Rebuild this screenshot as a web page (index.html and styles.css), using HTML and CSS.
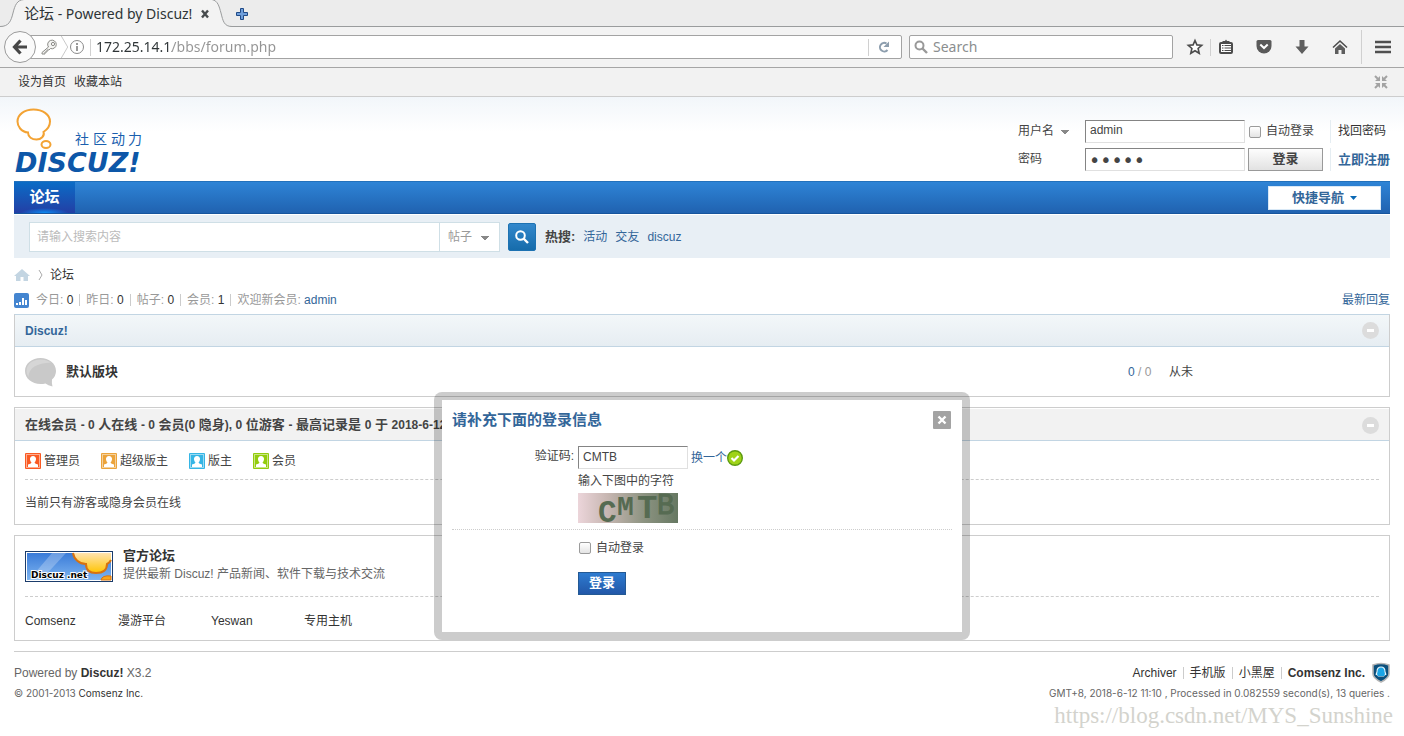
FILE: index.html
```html
<!DOCTYPE html>
<html lang="zh-CN">
<head>
<meta charset="utf-8">
<title>论坛 - Powered by Discuz!</title>
<link rel="stylesheet" href="styles.css">
</head>
<body>
<div class="browser">
  <div class="tabstrip">
    <svg class="tab-curve" width="24" height="27" viewBox="0 0 24 27"><path d="M0 26.500C9 26.500 11 21 13 13C15 5 17 0 24 0V27H0z" fill="#f3f3f3"/><path d="M0 26.500C9 26.500 11 21 13 13C15 5 17 0 24 -.5" fill="none" stroke="#9a9c9d"/></svg>
    <div class="tab">
      <span class="tab-title"><span class="tab-cjk">论坛</span> - Powered by Discuz!</span>
      <button class="icon-btn" aria-label="Close tab"><svg width="10" height="10" viewBox="0 0 10 10"><path d="M2 1.500L8 8.500M8 1.500L2 8.500" stroke="#474b4d" stroke-width="2.400"/></svg></button>
    </div>
    <svg class="tab-curve" width="20" height="27" viewBox="0 0 20 27"><path d="M0 0C6 1 7 6 9 13C11 21 12 26.500 20 26.500V27H0z" fill="#f3f3f3"/><path d="M0 -.5C6 1 7 6 9 13C11 21 12 26.500 20 26.500" fill="none" stroke="#9a9c9d"/></svg>
    <button class="icon-btn new-tab" aria-label="New tab"><svg width="12" height="12" viewBox="0 0 12 12"><path d="M4.500 .5h3v4h4v3h-4v4h-3v-4h-4v-3h4z" fill="#6f9fdc" stroke="#204a87"/></svg></button>
  </div>
  <div class="toolbar">
    <button class="back" aria-label="Back"><svg width="16" height="16" viewBox="0 0 16 16"><path d="M8.500 1.500L2.500 8l6 6.500M3 8h12" fill="none" stroke="#474747" stroke-width="3.200"/></svg></button>
    <div class="urlbar">
      <svg width="17" height="16" viewBox="0 0 17 16"><path d="M7.500 8L1 13.500V15h3v-2h2v-2h2l1.500-1.500A4.300 4.300 0 1 0 7.500 8z" fill="#f4f4f2" stroke="#8a8a86"/><circle cx="12" cy="5" r="1.600" fill="#fff" stroke="#8a8a86"/></svg>
      <svg class="chevron" width="9" height="24" viewBox="0 0 9 24"><path d="M1 0L8 12L1 24" fill="none" stroke="#c4c4c4"/></svg>
      <svg width="16" height="16" viewBox="0 0 16 16"><circle cx="8" cy="8" r="6.500" fill="none" stroke="#8b8b8b"/><path d="M8 7v5M8 4v2" stroke="#808080" stroke-width="1.600"/></svg>
      <span class="vline"></span>
      <input class="url" type="text" aria-label="Address" value="172.25.14.1/bbs/forum.php">
      <span class="vline"></span>
      <button class="icon-btn reload" aria-label="Reload"><svg width="12" height="12" viewBox="0 0 12 12"><path d="M9.500 9A4.300 4.300 0 1 1 8.500 2.500" fill="none" stroke="#8d9eae" stroke-width="2"/><path d="M11 .5V6H5.500z" fill="#8d9eae"/></svg></button>
    </div>
    <div class="searchbar">
      <svg width="14" height="14" viewBox="0 0 14 14"><circle cx="5.500" cy="5.500" r="4" fill="none" stroke="#999" stroke-width="2"/><path d="M8.500 8.500L13 13" stroke="#999" stroke-width="2.400"/></svg>
      <input type="text" aria-label="Search" placeholder="Search">
    </div>
    <div class="tools">
      <button class="icon-btn" aria-label="Bookmark"><svg width="16" height="16" viewBox="0 0 16 16"><path d="M8 1.500l1.900 4.400 4.800.4-3.600 3.200 1.100 4.800L8 11.800l-4.200 2.500 1.100-4.800L1.300 6.300l4.800-.4z" fill="#fff" stroke="#4c4c4c" stroke-width="1.600"/></svg></button>
      <span class="vline"></span>
      <button class="icon-btn" aria-label="Bookmarks menu"><svg width="16" height="16" viewBox="0 0 16 16"><rect x="2" y="4" width="12" height="10" rx="1" fill="#fff" stroke="#4c4c4c" stroke-width="2"/><path d="M4.500 4V2H7L8 .5 9 2h2.500v2z" fill="#4c4c4c"/><path d="M6.500 6.500H13M6.500 9H13M6.500 11.500H13M4 6.500h1.500M4 9h1.500M4 11.500h1.500" stroke="#4c4c4c"/></svg></button>
      <button class="icon-btn" aria-label="Pocket"><svg width="16" height="16" viewBox="0 0 16 16"><path d="M.5 2.500Q.5 1 2 1h12q1.500 0 1.500 1.500V7a7.500 7.500 0 0 1-15 0z" fill="#5a5a5a"/><path d="M4.300 5.500L8 9l3.700-3.500" fill="none" stroke="#fff" stroke-width="2"/></svg></button>
      <button class="icon-btn" aria-label="Downloads"><svg width="16" height="16" viewBox="0 0 16 16"><path d="M5.500 1h5v6.500h4L8 15 1.500 7.500h4z" fill="#5e5e5e"/></svg></button>
      <button class="icon-btn" aria-label="Home"><svg width="16" height="16" viewBox="0 0 16 16"><path d="M1 8.500L8 2l7 6.500" fill="none" stroke="#4c4c4c" stroke-width="1.600"/><path d="M3 9.500L8 5l5 4.500V15H9.500v-4h-3v4H3z" fill="#5e5e5e"/></svg></button>
      <span class="vline tall"></span>
      <button class="icon-btn" aria-label="Menu"><svg width="16" height="16" viewBox="0 0 16 16"><path d="M0 3h16M0 8h16M0 13h16" stroke="#505050" stroke-width="2.600"/></svg></button>
    </div>
  </div>
</div>

<div class="topbar">
  <nav class="toplinks"><a href="#">设为首页</a><a href="#">收藏本站</a></nav>
  <button class="icon-btn" aria-label="切换到窄版"><svg width="14" height="14" viewBox="0 0 14 14"><path d="M1 1l4 4M13 1L9 5M1 13l4-4M13 13l-4-4" stroke="#a3a3a3" stroke-width="2"/><path d="M6 1v5H1zM8 1v5h5zM6 13V8H1zM8 13V8h5z" fill="#a3a3a3"/></svg></button>
</div>

<div class="page">
  <header class="header">
    <a href="#" class="logo" aria-label="Discuz!">
      <svg width="130" height="68" viewBox="0 0 130 68">
        <path d="M14 26.500C7 26 3.500 20 3.500 15.500C3.500 8.500 10.500 3.500 19.500 3.500S36 8.500 36 15.500C36 21 32.500 24 29.500 26C31 30 27 33.500 22.500 33.500S14 31 14 26.500z" fill="#fff" stroke="#f3a334" stroke-width="2"/>
        <ellipse cx="32" cy="38.500" rx="4.500" ry="3.500" fill="#fff" stroke="#f3a334" stroke-width="2"/>
        <text class="logo-sub" x="61" y="38">社</text><text class="logo-sub" x="79" y="38">区</text><text class="logo-sub" x="97" y="38">动</text><text class="logo-sub" x="114" y="38">力</text>
        <text class="logo-main" x="1" y="66">DISCUZ!</text>
      </svg>
    </a>
    <form class="login">
      <select class="lg-user" aria-label="登录方式"><option>用户名</option></select>
      <input class="field" type="text" aria-label="用户名" value="admin">
      <label class="check"><input type="checkbox">自动登录</label>
      <a class="lg-link" href="#">找回密码</a>
      <label class="lg-pass" for="pw">密码</label>
      <input class="field dots" id="pw" type="password" value="admin">
      <button class="btn-grey" type="button">登录</button>
      <a class="lg-link strong" href="#">立即注册</a>
    </form>
  </header>

  <nav class="nav">
    <a class="nav-on" href="#">论坛</a>
    <button class="quick">快捷导航<svg width="7" height="4" viewBox="0 0 7 4"><path d="M0 0h7L3.500 4z" fill="#0a68b4"/></svg></button>
  </nav>

  <div class="search">
    <div class="search-box">
      <input type="text" aria-label="搜索" placeholder="请输入搜索内容">
      <select aria-label="搜索类型"><option>帖子</option></select>
    </div>
    <button class="search-btn" aria-label="搜索"><svg width="14" height="14" viewBox="0 0 14 14"><circle cx="5.500" cy="5.500" r="4.300" fill="none" stroke="#fff" stroke-width="2"/><path d="M8.500 8.500L13 13" stroke="#fff" stroke-width="2.400"/></svg></button>
    <div class="hot"><strong>热搜:</strong><a href="#">活动</a><a href="#">交友</a><a href="#">discuz</a></div>
  </div>

  <div class="crumb">
    <svg width="16" height="14" viewBox="0 0 16 14"><path d="M8 1l8 7h-2v5H9.500V9h-3v4H2V8H0z" fill="#c3d5e2"/></svg>
    <svg width="5" height="10" viewBox="0 0 5 10"><path d="M1 0l3 5-3 5" fill="none" stroke="#aaa"/></svg>
    <a href="#">论坛</a>
  </div>

  <div class="stats">
    <svg width="15" height="15" viewBox="0 0 15 15"><rect width="15" height="15" rx="2" fill="#4485d0"/><path d="M2 10h2v2H2zM5 9h2v3H5zM8 5h2v7H8zM11 7h2v5h-2z" fill="#fff"/></svg>
    <span>今日: <em>0</em></span><span>昨日: <em>0</em></span><span>帖子: <em>0</em></span><span>会员: <em>1</em></span><span>欢迎新会员: <a href="#">admin</a></span>
    <a class="latest" href="#">最新回复</a>
  </div>

  <section class="box blue">
    <div class="box-head"><h2><a href="#">Discuz!</a></h2><button class="icon-btn" aria-label="收起"><svg width="17" height="17" viewBox="0 0 17 17"><circle cx="8.500" cy="8.500" r="8.500" fill="#dcdcdc"/><path d="M5 7h7v3H5z" fill="#fff"/></svg></button></div>
    <table class="forums"><tr>
      <td class="f-icon"><svg width="32" height="30" viewBox="0 0 32 30"><path d="M15.500 1C24 1 31 6.500 31 14q0 5-4 8.500Q26.500 26 27.500 29.500 23 28.500 20.500 26.500 18 27 15.500 27C7 27 0 21.500 0 14S7 1 15.500 1z" fill="#c9c9c9"/><path d="M3.500 20C3.500 11 12 6 26 5.500 23 3.500 19 2.500 15.500 2.500 7 2.500 1.500 7.500 1.500 14q0 3.500 2 6z" fill="#d6d6d6"/></svg></td>
      <td class="f-name"><a href="#">默认版块</a></td>
      <td class="f-num"><b>0</b> / 0</td>
      <td class="f-last">从未</td>
    </tr></table>
  </section>

  <section class="box online">
    <div class="box-head"><h2>在线会员 <i>- 0</i> 人在线 <i>- 0</i> 会员<i>(0</i> 隐身<i>), 0</i> 位游客 <i>-</i> 最高记录是 <i>0</i> 于 <i>2018-6-12</i>.</h2><button class="icon-btn" aria-label="收起"><svg width="17" height="17" viewBox="0 0 17 17"><circle cx="8.500" cy="8.500" r="8.500" fill="#dcdcdc"/><path d="M5 7h7v3H5z" fill="#fff"/></svg></button></div>
    <div class="box-body">
      <div class="legend">
        <span><svg class="u-red" width="16" height="16" viewBox="0 0 16 16"><rect class="u-frame" width="16" height="16" rx="1"/><rect class="u-ring" x="1.500" y="1.500" width="13" height="13"/><path class="u-man" d="M8 3a3 3 0 0 1 3 3.500Q10.800 8.500 9.500 9.500 10 11 13 11.500V14H3v-2.500Q6 11 6.500 9.500 5.200 8.500 5 6.500A3 3 0 0 1 8 3z"/></svg>管理员</span>
        <span><svg class="u-orange" width="16" height="16" viewBox="0 0 16 16"><rect class="u-frame" width="16" height="16" rx="1"/><rect class="u-ring" x="1.500" y="1.500" width="13" height="13"/><path class="u-man" d="M8 3a3 3 0 0 1 3 3.500Q10.800 8.500 9.500 9.500 10 11 13 11.500V14H3v-2.500Q6 11 6.500 9.500 5.200 8.500 5 6.500A3 3 0 0 1 8 3z"/></svg>超级版主</span>
        <span><svg class="u-blue" width="16" height="16" viewBox="0 0 16 16"><rect class="u-frame" width="16" height="16" rx="1"/><rect class="u-ring" x="1.500" y="1.500" width="13" height="13"/><path class="u-man" d="M8 3a3 3 0 0 1 3 3.500Q10.800 8.500 9.500 9.500 10 11 13 11.500V14H3v-2.500Q6 11 6.500 9.500 5.200 8.500 5 6.500A3 3 0 0 1 8 3z"/></svg>版主</span>
        <span><svg class="u-green" width="16" height="16" viewBox="0 0 16 16"><rect class="u-frame" width="16" height="16" rx="1"/><rect class="u-ring" x="1.500" y="1.500" width="13" height="13"/><path class="u-man" d="M8 3a3 3 0 0 1 3 3.500Q10.800 8.500 9.500 9.500 10 11 13 11.500V14H3v-2.500Q6 11 6.500 9.500 5.200 8.500 5 6.500A3 3 0 0 1 8 3z"/></svg>会员</span>
      </div>
      <p class="guests">当前只有游客或隐身会员在线</p>
    </div>
  </section>

  <section class="box links">
    <div class="box-body">
      <div class="partner">
        <svg width="88" height="31" viewBox="0 0 88 31">
          <defs><linearGradient id="sky" x2="0" y2="1"><stop offset="0" stop-color="#3a7bd8"/><stop offset="1" stop-color="#7db4f0"/></linearGradient><linearGradient id="sun" x2="0" y2="1"><stop offset="0" stop-color="#ffe3b0"/><stop offset="1" stop-color="#ffc400"/></linearGradient></defs>
          <rect x=".5" y=".5" width="87" height="30" fill="#fff" stroke="#1b3c6b"/><rect x="2" y="2" width="84" height="27" fill="url(#sky)"/>
          <path d="M27 2h14L16 29H4z" fill="#fff" fill-opacity=".25"/>
          <path d="M48 2c1 6 6 11 13 11 0 7 4 9 10 9 7 0 11-3 11-9 2-1 3-2 4-4V2z" fill="url(#sun)"/>
          <path d="M48 2c1 6 6 11 13 11 0 7 4 9 10 9 7 0 11-3 11-9 2-1 3-2 4-4" fill="none" stroke="#d8720f" stroke-width="2"/>
          <path d="M76 29q1-5 10-4v4z" fill="#f7a51c" stroke="#d8720f"/>
          <text class="badge-text" x="6" y="27">Discuz .net</text>
        </svg>
        <div><a class="p-title" href="#">官方论坛</a><p>提供最新 Discuz! 产品新闻、软件下载与技术交流</p></div>
      </div>
      <ul class="plain"><li><a href="#">Comsenz</a></li><li><a href="#">漫游平台</a></li><li><a href="#">Yeswan</a></li><li><a href="#">专用主机</a></li></ul>
    </div>
  </section>

  <footer class="footer">
    <div><p>Powered by <strong>Discuz!</strong> X3.2</p><p class="small">© 2001-2013 <a href="#">Comsenz Inc.</a></p></div>
    <div class="f-right">
      <p class="f-links"><a href="#">Archiver</a><a href="#">手机版</a><a href="#">小黑屋</a><a href="#"><strong>Comsenz Inc.</strong></a><svg width="18" height="20" viewBox="0 0 18 20"><path d="M1 2q8-3 16 0v9q0 4-8 8-8-4-8-8z" fill="#0b4f7c" stroke="#b5b5b5" stroke-width="1.600"/><path d="M9 3.500q4.500 0 4.500 5l1 3q-1 1-1.500.5L12 13.500H6L5 12q-.5.500-1.500-.5l1-3q0-5 4.500-5z" fill="#e6f6fd"/><path d="M9 4.500q3.500 0 3.500 4.500l.5 2-1 2H6l-1-2 .5-2Q5.500 4.500 9 4.500z" fill="#1ba5e6"/></svg></p>
      <p class="small">GMT+8, 2018-6-12 11:10 , Processed in 0.082559 second(s), 13 queries .</p>
    </div>
  </footer>
  <div class="watermark">https://blog.csdn.net/MYS_Sunshine</div>
</div>

<div class="overlay">
  <div class="dialog" role="dialog" aria-labelledby="dlg">
    <div class="dlg-head"><h3 id="dlg">请补充下面的登录信息</h3><button class="icon-btn" aria-label="关闭"><svg width="18" height="18" viewBox="0 0 18 18"><rect width="18" height="18" rx="1" fill="#a3a3a3"/><path d="M5.500 5.500l7 7M12.500 5.500l-7 7" stroke="#fff" stroke-width="2.400"/></svg></button></div>
    <div class="dlg-code">
      <label for="code">验证码:</label>
      <div class="code-main">
        <div class="code-row"><input class="field" id="code" type="text" value="CMTB"><a href="#">换一个</a><svg width="16" height="16" viewBox="0 0 16 16"><circle cx="8" cy="8" r="7.300" fill="#9fd318" stroke="#5c9a10" stroke-width="1.400"/><path d="M4.500 8l2.500 2.500 4.500-4.500" fill="none" stroke="#fff" stroke-width="2.200"/></svg></div>
        <p>输入下图中的字符</p>
        <svg class="captcha" width="100" height="30" viewBox="0 0 100 30">
          <defs><linearGradient id="cap"><stop offset="0" stop-color="#ecd5da"/><stop offset=".3" stop-color="#c6b6b1"/><stop offset=".65" stop-color="#8e9482"/><stop offset="1" stop-color="#667862"/></linearGradient></defs>
          <rect width="100" height="30" fill="url(#cap)"/>
          <text class="cap c1" x="20" y="29">C</text><text class="cap c2" x="39" y="22">M</text><text class="cap c4" x="59" y="25">T</text><text class="cap c3" x="79" y="21">B</text>
        </svg>
      </div>
    </div>
    <div class="dlg-foot">
      <label class="check"><input type="checkbox">自动登录</label>
      <button class="btn-blue">登录</button>
    </div>
  </div>
</div>
</body>
</html>
```
FILE: styles.css
```css
* { box-sizing: border-box; }
body { margin: 0; background: #fff; color: #444; font: 12px/16px "Liberation Sans", "Noto Sans CJK SC", sans-serif; }
a { color: #333; text-decoration: none; }
p, h2, h3, ul { margin: 0; padding: 0; }
button, input, select { font: inherit; color: inherit; margin: 0; }
svg { display: block; flex: none; overflow: visible; }
em, i { font-style: normal; }
.icon-btn { display: block; border: 0; padding: 0; background: none; }

/* browser window */
.browser { font: 14px/20px "Noto Sans", "Noto Sans CJK SC", sans-serif; color: #2e3436; }
.tabstrip { display: flex; height: 27px; background: #ececec; box-shadow: inset 0 -1px #9a9c9d; }
.tab { display: flex; align-items: center; gap: 8px; background: #f3f3f3; padding-right: 2px; }
.tab-title { white-space: nowrap; }
.tab-cjk { font-size: 15px; }
.new-tab { padding: 0 4px; }
.toolbar { display: flex; align-items: center; height: 41px; padding: 0 13px 0 4px; background: #f3f3f3; border-bottom: 1px solid #a6a6a6; }
.back { display: grid; place-items: center; width: 32px; height: 32px; padding: 0; border: 1px solid #9b9b9b; border-radius: 50%; background: #fafafa; z-index: 1; }
.urlbar, .searchbar { display: flex; align-items: center; height: 24px; border: 1px solid #a3a3a3; border-radius: 2px; background: #fff; }
.urlbar { flex: 1; margin-left: -7px; padding-left: 11px; gap: 2px; }
.chevron { height: 22px; margin-right: -2px; }
.vline { width: 1px; height: 17px; background: #d0d0d0; }
.urlbar .vline { margin: 0 3px; }
.urlbar input, .searchbar input { flex: 1; min-width: 0; border: 0; padding: 0; background: none; outline: 0; }
.urlbar .url { background: linear-gradient(90deg, #2e3436 76px, #949494 76px); -webkit-background-clip: text; background-clip: text; -webkit-text-fill-color: transparent; }
.reload { padding: 0 11px 0 4px; }
.searchbar { width: 264px; margin-left: 7px; padding: 0 4px; gap: 5px; }
.searchbar input::placeholder { color: #8b8e8f; opacity: 1; }
.tools { display: flex; align-items: center; padding-left: 14px; }
.icon-btn + .icon-btn { margin-left: 22px; }
.tools .vline { margin: 0 7px; }
.tools .tall { height: 34px; margin: 0 13px; }

/* page frame */
.topbar { display: flex; align-items: center; justify-content: space-between; height: 29px; padding: 0 16px 0 18px; background: #f2f2f2; border-bottom: 1px solid #cdcdcd; }
.toplinks { display: flex; gap: 8px; }
.page { padding: 0 14px; background: linear-gradient(#f2f6fa, #fff 35px); }
.header { display: flex; justify-content: space-between; align-items: flex-start; height: 84px; padding-top: 9px; }
.logo-sub { font: 14px "Noto Sans CJK SC", sans-serif; fill: #1a5fae; }
.logo-main { font: italic bold 27px "DejaVu Sans", sans-serif; fill: #0d57a8; }
.login { display: grid; grid-template-columns: 67px 163px 82px 60px; row-gap: 5px; align-items: center; padding-top: 14px; }
.login > * { height: 23px; line-height: 23px; }
.lg-user, .search-box select { appearance: none; border: 0; outline: 0; padding: 0; }
.lg-user { width: 52px; background: linear-gradient(#888, #888) no-repeat 43px 10px / 8px 1px, linear-gradient(#888, #888) no-repeat 44px 11px / 6px 1px, linear-gradient(#888, #888) no-repeat 45px 12px / 4px 1px, linear-gradient(#888, #888) no-repeat 46px 13px / 2px 1px; }
.field { width: 160px; height: 23px; border: 1px solid; border-color: #848484 #e0e0e0 #e0e0e0 #848484; padding: 0 5px 2px 4px; background: #fff; outline: 0; }
.login .dots { padding: 0 3px; font: 19px/21px "DejaVu Sans", sans-serif; }
.check { display: flex; align-items: center; gap: 5px; padding-left: 1px; }
.check input { appearance: none; width: 12px; height: 12px; border: 1px solid #9b9b9b; border-radius: 2px; background: linear-gradient(#fff, #e4e4e4); }
.lg-link { border-left: 1px solid #e5edf2; padding-left: 7px; white-space: nowrap; }
.strong { color: #369; font-size: 13px; font-weight: bold; }
.btn-grey { width: 75px; border: 1px solid #999; background: linear-gradient(#fdfdfd, #e2e2e2); font-size: 13px; font-weight: bold; padding: 0 0 2px; }
.login .btn-grey { line-height: 19px; }

.nav { display: flex; justify-content: space-between; align-items: center; height: 33px; padding-right: 9px; background: linear-gradient(#2e84d6, #2062b0); border-top: 1px solid #2371bb; border-bottom: 1px solid #16559d; }
.nav-on { align-self: stretch; width: 61px; color: #fff; font-size: 15px; font-weight: bold; line-height: 29px; text-align: center; background: radial-gradient(ellipse 24px 5px at 50% 100%, #0a8cf5, transparent), linear-gradient(#0b6cc6, #233fa5); }
.quick { display: flex; align-items: center; justify-content: center; gap: 6px; width: 113px; height: 24px; border: 1px solid #d8e8f6; background: #fff; color: #369; font-size: 13px; font-weight: bold; }
.search { display: flex; align-items: center; height: 44px; padding: 0 15px; background: #e8eff5; border-top: 1px solid #fff; }
.search-box { display: flex; width: 471px; height: 30px; border: 1px solid #cfdfe6; background: #fff; }
.search-box input { flex: 1; min-width: 0; border: 0; padding: 0 7px; background: none; outline: 0; }
.search-box input::placeholder { color: #bbb; opacity: 1; }
.search-box select { width: 60px; border-left: 1px solid #cfdfe6; padding-left: 8px; color: #999; background: linear-gradient(#888, #888) no-repeat 41px 13px / 8px 1px, linear-gradient(#888, #888) no-repeat 42px 14px / 6px 1px, linear-gradient(#888, #888) no-repeat 43px 15px / 4px 1px, linear-gradient(#888, #888) no-repeat 44px 16px / 2px 1px; }
.search-btn { display: grid; place-items: center; width: 28px; height: 28px; margin: 0 9px 0 8px; border: 1px solid #1d72b2; border-radius: 2px; padding: 0; background: linear-gradient(#3388cc, #166cab); }
.hot { display: flex; gap: 8px; }
.hot a, .stats a { color: #369; }
.hot strong { font-size: 13px; }

.crumb { display: flex; align-items: center; gap: 8px; height: 34px; }
.crumb a { margin-left: -1px; }
.stats { display: flex; align-items: center; height: 16px; margin-bottom: 6px; color: #999; }
.stats span { line-height: 12px; padding: 0 6px; border-left: 1px solid #ccc; }
.stats svg + span { border: 0; padding-left: 7px; }
.stats em { color: #333; }
.latest { margin-left: auto; }

/* boxes */
.box { margin-bottom: 10px; border: 1px solid #cdcdcd; background: #fff; }
.box-head { display: flex; align-items: center; justify-content: space-between; height: 33px; padding: 2px 10px 0; background: #f2f2f2; border-bottom: 1px solid #c2d5e3; box-shadow: inset 0 1px #fff; }
.box h2 { font-size: 13px; line-height: 16px; white-space: nowrap; }
.box h2 i, .blue h2 a { font-size: 12px; }
.blue { border-top-color: #c2d5e3; }
.blue .box-head { height: 32px; padding-top: 0; background: linear-gradient(#f3f7f9, #e6edf2); box-shadow: none; }
.blue h2 a { color: #369; }
.forums { width: 100%; border-collapse: collapse; table-layout: fixed; }
.forums td { height: 49px; padding: 0; }
.f-icon { width: 51px; }
.forums .f-icon { padding-left: 10px; }
.f-name a { font-size: 13px; font-weight: bold; }
.f-num { width: 41px; color: #999; }
.f-num b { color: #369; font-weight: normal; }
.f-last { width: 220px; }
.box-body { padding: 0 10px; }
.legend { display: flex; gap: 21px; padding: 12px 0 10px; border-bottom: 1px dashed #cdcdcd; }
.legend span { display: flex; gap: 3px; }
.guests { padding: 15px 0 13px; }
.u-frame { fill: var(--u); }
.u-ring { fill: none; stroke: #fff; stroke-opacity: .5; }
.u-man { fill: #fff; }
.u-red { --u: #fa5a23; }
.u-orange { --u: #eba33b; }
.u-blue { --u: #35b5e5; }
.u-green { --u: #93cc0d; }
.partner { display: flex; align-items: center; gap: 10px; height: 61px; border-bottom: 1px dashed #cdcdcd; color: #666; }
.partner div { display: grid; gap: 2px; padding-bottom: 3px; }
.p-title { font-size: 13px; font-weight: bold; }
.badge-text { font: bold 9px "DejaVu Sans", sans-serif; fill: #000; stroke: #fff; stroke-width: 2px; paint-order: stroke; }
.plain { display: flex; padding: 16px 0 11px; list-style: none; }
.plain li { width: 93px; }

.footer { display: flex; justify-content: space-between; padding-top: 13px; border-top: 1px solid #cdcdcd; color: #666; }
.footer > div { display: grid; gap: 4px; align-content: start; }
.footer strong { color: #333; }
.small { font-family: Inter, "Liberation Sans", sans-serif; font-size: 10px; }
.f-links { display: flex; justify-content: flex-end; height: 16px; align-items: center; }
.f-links a + a { border-left: 1px solid #ccc; line-height: 12px; margin-left: 6px; padding-left: 6px; }
.f-links svg { margin-left: 7px; }
.f-right .small { text-align: right; }
.watermark { padding-top: 3px; margin-right: -3px; text-align: right; font: 23px/24px "Liberation Serif", serif; color: #d3d3cd; }

/* dialog */
.overlay { position: absolute; top: 392px; left: 0; right: 0; display: flex; justify-content: center; }
.dialog { width: 536px; border: 8px solid rgba(0, 0, 0, .2); border-radius: 8px; background: #fff; background-clip: padding-box; padding: 10px 10px 37px; }
.dlg-head { display: flex; align-items: center; justify-content: space-between; height: 20px; padding-right: 1px; }
.dlg-head h3 { color: #369; font-size: 15px; line-height: 20px; }
.dlg-code { display: grid; grid-template-columns: 122px 1fr; column-gap: 4px; padding: 16px 0 6px; border-bottom: 1px dotted #cdcdcd; }
.dlg-code > label { text-align: right; line-height: 20px; }
.code-row { display: flex; align-items: center; gap: 3px; }
.code-row .field { width: 110px; }
.code-row a { color: #369; margin-right: -3px; }
.code-main p { padding: 4px 0; }
.cap { font-family: "Liberation Mono", monospace; font-weight: bold; fill: #566b52; }
.c1 { font-size: 31px; }
.c2 { font-size: 28px; }
.c3 { font-size: 29px; font-weight: normal; stroke: #566b52; }
.c4 { font-size: 34px; }
.dlg-foot { display: grid; justify-items: start; gap: 16px; padding: 10px 0 0 126px; }
.btn-blue { width: 48px; height: 23px; border: 1px solid #235994; padding: 0 0 2px; background: linear-gradient(#2d7bd0, #2257a8); color: #fff; font-size: 13px; line-height: 19px; font-weight: bold; }
```
